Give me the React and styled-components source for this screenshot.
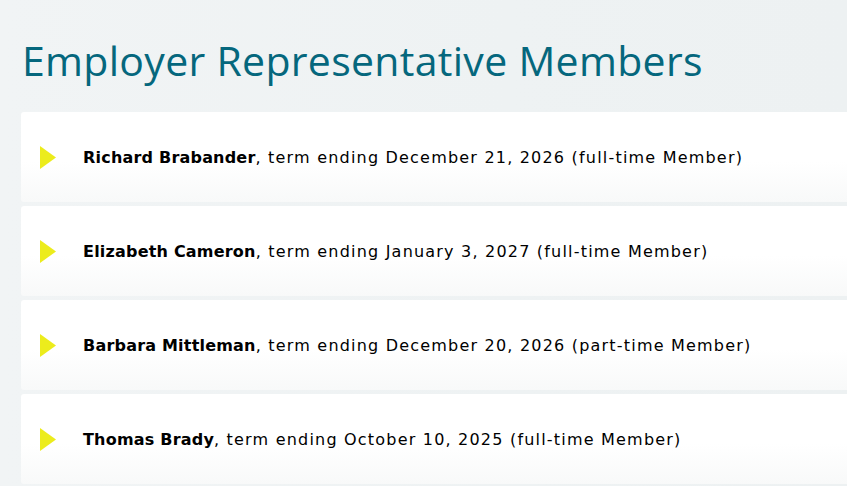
import React from "react"
import styled, { createGlobalStyle } from "styled-components"

const members = [
  { name: "Richard Brabander", term: "December 21, 2026", kind: "full-time" },
  { name: "Elizabeth Cameron", term: "January 3, 2027", kind: "full-time" },
  { name: "Barbara Mittleman", term: "December 20, 2026", kind: "part-time" },
  { name: "Thomas Brady", term: "October 10, 2025", kind: "full-time" },
]

export default function App() {
  return (
    <>
      <GlobalStyle />
      <Page>
        <Heading>Employer Representative Members</Heading>
        <List>
          {members.map((m) => (
            <Card key={m.name}>
              <Arrow viewBox="0 0 16 23" aria-hidden="true">
                <polygon points="0,0 16,11.5 0,23" />
              </Arrow>
              <Label>
                <strong>{m.name}</strong>, term ending {m.term} ({m.kind} Member)
              </Label>
            </Card>
          ))}
        </List>
      </Page>
    </>
  )
}

const GlobalStyle = createGlobalStyle`
  html, body {
    margin: 0;
    padding: 0;
    overflow: hidden;
    background: #eef2f3;
  }
`

const Page = styled.main`
  min-height: 486px;
  padding: 33px 0 0 21px;
  box-sizing: border-box;
  background: linear-gradient(90deg, #f1f4f5 0%, #eef2f3 60%, #edf1f2 100%);
  font-family: "Open Sans", "DejaVu Sans", sans-serif;
`

const Heading = styled.h1`
  margin: 0 0 24px 1px;
  font-size: 41px;
  font-weight: 400;
  line-height: 55px;
  color: #05677d;
  letter-spacing: 0.3px;
`

const List = styled.div`
  display: flex;
  flex-direction: column;
  gap: 4px;
`

const Card = styled.section`
  display: flex;
  align-items: center;
  gap: 27px;
  width: 826px;
  margin-right: -40px;
  height: 90px;
  padding-left: 19px;
  box-sizing: border-box;
  border-radius: 3px 0 0 3px;
  background: linear-gradient(180deg, #ffffff 0%, #ffffff 55%, #f8f9f9 100%);
`

const Arrow = styled.svg`
  width: 16px;
  height: 23px;
  flex: none;
  fill: #ecec1c;
`

const Label = styled.span`
  font-family: "DejaVu Sans", "Open Sans", sans-serif;
  font-size: 16px;
  font-weight: 400;
  color: #000;
  letter-spacing: 1.2px;

  strong {
    font-weight: 700;
    letter-spacing: 0.2px;
  }
`
